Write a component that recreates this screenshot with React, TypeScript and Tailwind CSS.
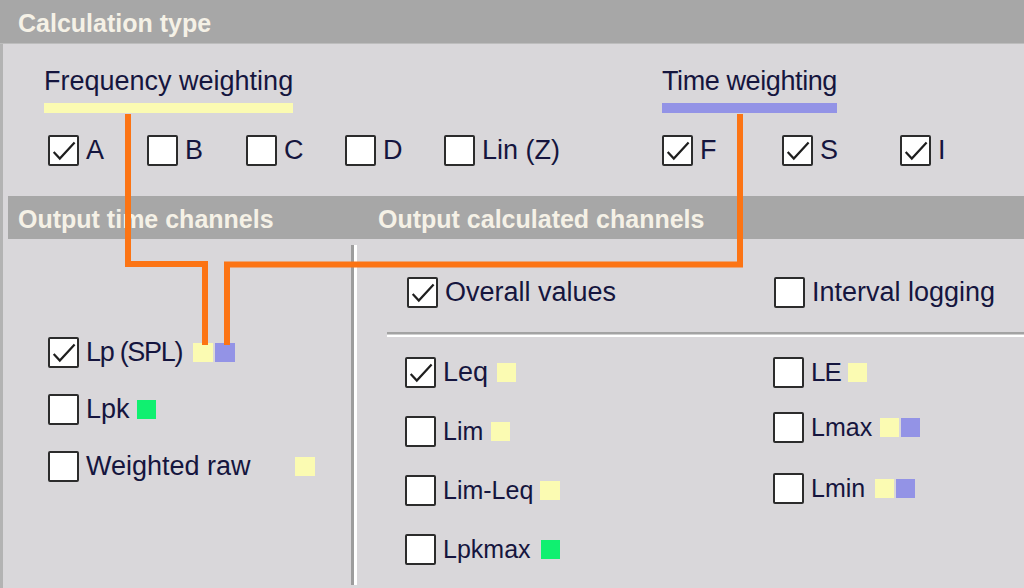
import React from "react";

const FONT = { fontFamily: '"Liberation Sans", Arial, sans-serif' };

function Box({ checked }: { checked?: boolean }) {
  return (
    <span className="relative flex h-[31px] w-[31px] shrink-0 items-center justify-center rounded-[2px] border-2 border-[#2c2c2c] bg-white">
      {checked && (
        <svg viewBox="0 0 27 27" className="absolute inset-0 h-full w-full">
          <path d="M3.7 15 L9.8 21.6 L24.6 5.6" fill="none" stroke="#1e1e1e" strokeWidth="2.2" strokeLinejoin="miter" />
        </svg>
      )}
    </span>
  );
}

function Sq({ c, w = "w-[20px]", h = "h-[19px]" }: { c: string; w?: string; h?: string }) {
  return <span className={`${w} ${h} shrink-0 ${c}`} />;
}

function Item({
  label,
  checked,
  labelW,
  tight,
  children,
}: {
  label: string;
  checked?: boolean;
  labelW?: string;
  tight?: string;
  children?: React.ReactNode;
}) {
  return (
    <div className="flex h-[31px] items-center">
      <Box checked={checked} />
      <span
        className={`ml-[7px] whitespace-nowrap text-[#15153e] leading-[31px] ${tight ?? "text-[27px]"} ${labelW ?? ""}`}
      >
        {label}
      </span>
      {children && <span className="flex items-center gap-[2px]">{children}</span>}
    </div>
  );
}

const Y = "bg-[#fbfbb2]";
const B = "bg-[#9393e6]";
const G = "bg-[#10f070]";
const T25 = "text-[25px]";

export default function App() {
  return (
    <div style={FONT} className="relative h-[588px] w-[1024px] overflow-hidden bg-[#d9d7da]">
      {/* Calculation type header */}
      <div className="flex h-[44px] items-center border-b border-[#bdbdbd] bg-[#a7a7a7] pl-[18px] pt-[3px]">
        <span className="text-[25px] font-bold leading-none text-[#f5f1e6]">Calculation type</span>
      </div>

      <div className="flex h-[544px] flex-col border-l-[3px] border-[#b3b3b3]">
        {/* top section */}
        <div className="flex h-[152px] pl-[41px] pt-[22px]">
          <div className="w-[618px] shrink-0">
            <div className="flex w-fit flex-col">
              <span className="text-[27px] leading-[30px] text-[#15153e]">Frequency weighting</span>
              <span className="mt-[7px] h-[10px] w-full bg-[#fbfbb2]" />
            </div>
            <div className="mt-[22px] flex pl-[4px]">
              <div className="w-[99px]"><Item label="A" checked /></div>
              <div className="w-[99px]"><Item label="B" /></div>
              <div className="w-[99px]"><Item label="C" /></div>
              <div className="w-[99px]"><Item label="D" /></div>
              <div className="w-[150px]"><Item label="Lin (Z)" /></div>
            </div>
          </div>
          <div>
            <div className="flex w-fit flex-col">
              <span className="text-[27px] leading-[30px] tracking-[-0.4px] text-[#15153e]">Time weighting</span>
              <span className="mt-[7px] h-[10px] w-full bg-[#9393e6]" />
            </div>
            <div className="mt-[22px] flex">
              <div className="w-[120px]"><Item label="F" checked /></div>
              <div className="w-[118px]"><Item label="S" checked /></div>
              <div className="w-[80px]"><Item label="I" checked /></div>
            </div>
          </div>
        </div>

        {/* Output header bar */}
        <div className="ml-[5px] flex h-[43px] shrink-0 items-center bg-[#a7a7a7] pl-[10px] pt-[3px]">
          <span className="w-[360px] shrink-0 text-[25px] font-bold leading-none text-[#f5f1e6]">Output time channels</span>
          <span className="text-[25px] font-bold leading-none text-[#f5f1e6]">Output calculated channels</span>
        </div>

        {/* bottom area */}
        <div className="flex flex-1">
          {/* left column */}
          <div className="flex w-[348px] shrink-0 flex-col gap-[26px] pl-[45px] pt-[98px]">
            <Item label="Lp (SPL)" checked tight="text-[27px] tracking-[-1.3px]" labelW="w-[107px]">
              <Sq c={Y} />
              <Sq c={B} />
            </Item>
            <Item label="Lpk" labelW="w-[51px]">
              <Sq c={G} w="w-[19px]" />
            </Item>
            <Item label="Weighted raw" labelW="w-[209px]">
              <Sq c={Y} />
            </Item>
          </div>

          {/* separator */}
          <div className="mb-[3px] mt-[6px] flex shrink-0">
            <div className="w-[3px] bg-[#9d9d9d]" />
            <div className="w-[3px] bg-white" />
          </div>

          {/* right column */}
          <div className="flex flex-1 flex-col pt-[38px]">
            <div className="flex pl-[50px]">
              <div className="w-[367px]"><Item label="Overall values" checked /></div>
              <Item label="Interval logging" />
            </div>
            <div className="ml-[30px] mt-[24px]">
              <div className="h-[2px] bg-[#a3a3a3]" />
              <div className="h-[1px] bg-[#cfcfcf]" />
              <div className="h-[2px] bg-white" />
            </div>
            <div className="mt-[20px] flex pl-[48px]">
              <div className="flex w-[368px] flex-col gap-[28px]">
                <Item label="Leq" checked labelW="w-[54px]">
                  <Sq c={Y} w="w-[19px]" />
                </Item>
                <Item label="Lim" tight={T25} labelW="w-[48px]">
                  <Sq c={Y} w="w-[19px]" />
                </Item>
                <Item label="Lim-Leq" tight={T25} labelW="w-[97px]">
                  <Sq c={Y} w="w-[20px]" />
                </Item>
                <Item label="Lpkmax" tight={T25} labelW="w-[98px]">
                  <Sq c={G} w="w-[19px]" />
                </Item>
              </div>
              <div className="flex flex-col">
                <Item label="LE" tight="text-[26px] tracking-[-1px]" labelW="w-[37px]">
                  <Sq c={Y} w="w-[19px]" />
                </Item>
                <div className="mt-[24px]">
                  <Item label="Lmax" tight={T25} labelW="w-[69px]">
                    <Sq c={Y} w="w-[19px]" />
                    <Sq c={B} w="w-[19px]" />
                  </Item>
                </div>
                <div className="mt-[30px]">
                  <Item label="Lmin" tight={T25} labelW="w-[64px]">
                    <Sq c={Y} w="w-[19px]" />
                    <Sq c={B} w="w-[19px]" />
                  </Item>
                </div>
              </div>
            </div>
          </div>
        </div>
      </div>

      {/* orange connection lines (overlay) */}
      <svg className="pointer-events-none absolute left-0 top-0" width="1024" height="588" viewBox="0 0 1024 588">
        <path d="M128 114 V264 H205 V345" fill="none" stroke="#fc7414" strokeWidth="6" strokeLinejoin="miter" />
        <path d="M740 114 V264.5 H227 V345" fill="none" stroke="#fc7414" strokeWidth="6" strokeLinejoin="miter" />
      </svg>
    </div>
  );
}
